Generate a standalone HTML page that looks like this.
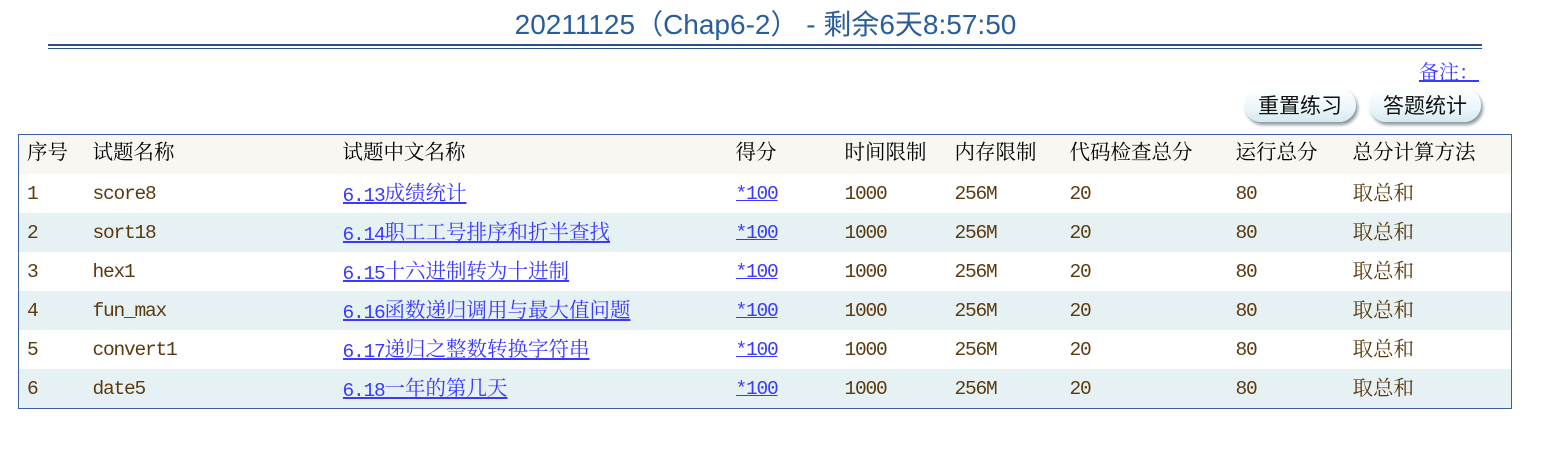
<!DOCTYPE html>
<html><head><meta charset="utf-8"><style>
body{margin:0;background:#fff;width:1554px;height:467px;position:relative;overflow:hidden;font-family:"Liberation Mono","Noto Serif CJK SC",serif;}
.title{position:absolute;left:0;width:1531px;top:3px;text-align:center;font-family:"Liberation Sans","Noto Sans CJK SC",sans-serif;font-size:28px;color:#2b5d9b;}
.l1{position:absolute;left:48px;width:1434px;top:44px;height:2px;background:#2b4f8a}
.l2{position:absolute;left:48px;width:1434px;top:48px;height:1px;background:#2b4f8a}
.note{position:absolute;left:1419px;top:56px;font-family:"Noto Serif CJK SC",serif;font-size:20px;color:#3a3aff;text-decoration:underline;}
.btn{position:absolute;top:88px;height:34px;width:112px;border-radius:17px;background:linear-gradient(#fff,#eaf6fb 60%,#d6e9ef);box-shadow:2px 3px 3px #8a9aa0;font-family:"Noto Sans CJK SC",sans-serif;font-size:21px;line-height:34px;text-align:center;color:#111}
table{position:absolute;left:18px;top:134px;width:1494px;border:1px solid #3b62a0;border-collapse:collapse;font-size:20.5px;}
tr{height:39px}
td{height:39px;padding:0;color:#5a3a10;white-space:nowrap;line-height:30px;overflow:hidden}
tr.h td{background:#f8f7f2;color:#000}
tr.a td{background:#e6f1f3}
tr:not(.h) td:not(.m){padding-top:4px;height:35px}
a{color:#3a3aff;text-decoration:underline}
td:first-child{padding-left:8px}
.m{font-size:19.5px;letter-spacing:-1.2px}
.s{font-size:19.5px;letter-spacing:-1.2px;position:relative;top:1px}
td.m{font-size:19.5px;height:39px;padding-top:0}
</style></head><body>
<div class="title">20211125（Chap6-2） - 剩余6天8:57:50</div>
<div class="l1"></div><div class="l2"></div>
<div class="note">备注：</div>
<div class="btn" style="left:1244px">重置练习</div>
<div class="btn" style="left:1369px">答题统计</div>
<table>
<colgroup><col style="width:74px"><col style="width:250px"><col style="width:393px"><col style="width:109px"><col style="width:110px"><col style="width:115px"><col style="width:166px"><col style="width:117px"><col></colgroup>
<tr class="h"><td>序号</td><td>试题名称</td><td>试题中文名称</td><td>得分</td><td>时间限制</td><td>内存限制</td><td>代码检查总分</td><td>运行总分</td><td>总分计算方法</td></tr>
<tr><td class="m">1</td><td class="m">score8</td><td><a><span class="s">6.13</span>成绩统计</a></td><td class="m"><a>*100</a></td><td class="m">1000</td><td class="m">256M</td><td class="m">20</td><td class="m">80</td><td>取总和</td></tr>
<tr class="a"><td class="m">2</td><td class="m">sort18</td><td><a><span class="s">6.14</span>职工工号排序和折半查找</a></td><td class="m"><a>*100</a></td><td class="m">1000</td><td class="m">256M</td><td class="m">20</td><td class="m">80</td><td>取总和</td></tr>
<tr><td class="m">3</td><td class="m">hex1</td><td><a><span class="s">6.15</span>十六进制转为十进制</a></td><td class="m"><a>*100</a></td><td class="m">1000</td><td class="m">256M</td><td class="m">20</td><td class="m">80</td><td>取总和</td></tr>
<tr class="a"><td class="m">4</td><td class="m">fun_max</td><td><a><span class="s">6.16</span>函数递归调用与最大值问题</a></td><td class="m"><a>*100</a></td><td class="m">1000</td><td class="m">256M</td><td class="m">20</td><td class="m">80</td><td>取总和</td></tr>
<tr><td class="m">5</td><td class="m">convert1</td><td><a><span class="s">6.17</span>递归之整数转换字符串</a></td><td class="m"><a>*100</a></td><td class="m">1000</td><td class="m">256M</td><td class="m">20</td><td class="m">80</td><td>取总和</td></tr>
<tr class="a"><td class="m">6</td><td class="m">date5</td><td><a><span class="s">6.18</span>一年的第几天</a></td><td class="m"><a>*100</a></td><td class="m">1000</td><td class="m">256M</td><td class="m">20</td><td class="m">80</td><td>取总和</td></tr>
</table>
</body></html>
